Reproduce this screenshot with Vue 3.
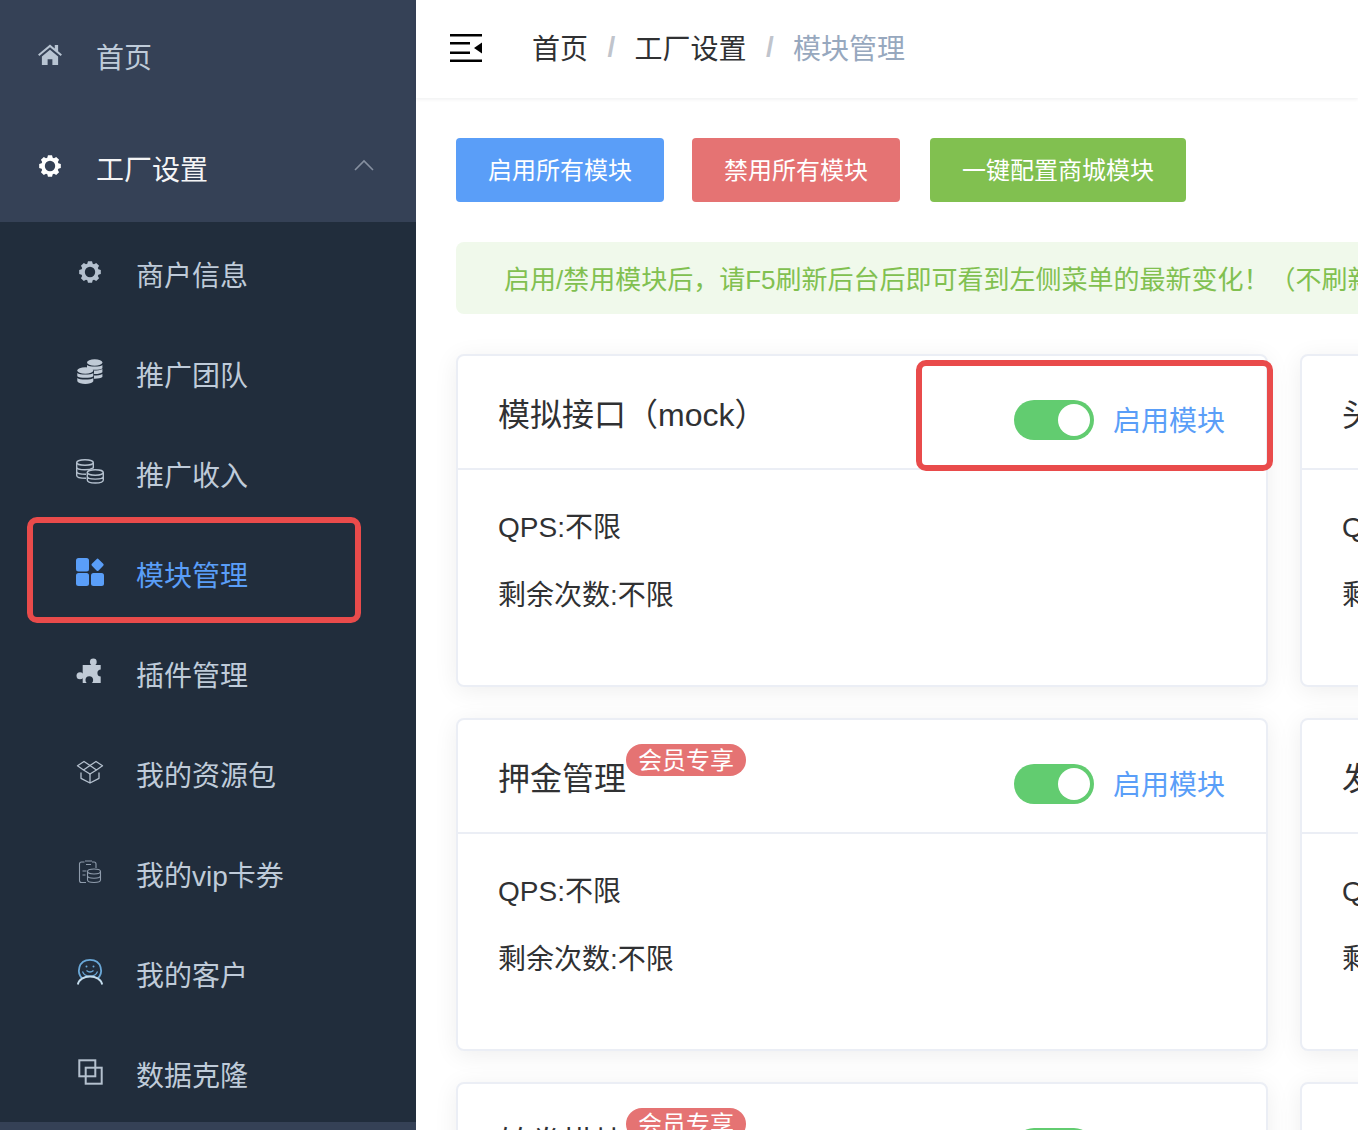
<script setup>
const subMenu = [
  { name: '商户信息', icon: 'gear' },
  { name: '推广团队', icon: 'coins' },
  { name: '推广收入', icon: 'coinsLine' },
  { name: '模块管理', icon: 'apps', active: true },
  { name: '插件管理', icon: 'puzzle' },
  { name: '我的资源包', icon: 'box' },
  { name: '我的vip卡券', icon: 'clip' },
  { name: '我的客户', icon: 'client' },
  { name: '数据克隆', icon: 'clone' }
]

// gear outline: 8 teeth around a 30x30 box
const makeGear = (c, outer, inner) => {
  const pts = []
  for (let i = 0; i < 8; i++) {
    const a = (i * Math.PI) / 4
    const w = Math.PI / 11
    const add = (r, t) => pts.push(`${(c + r * Math.cos(t)).toFixed(2)},${(c + r * Math.sin(t)).toFixed(2)}`)
    add(inner, a - w * 1.1)
    add(outer, a - w * 0.65)
    add(outer, a + w * 0.65)
    add(inner, a + w * 1.1)
  }
  return pts.join(' ')
}
const gearPoints = makeGear(15, 11, 8.8)

const cards = [
  { title: '模拟接口（mock）', side: '头' },
  { title: '押金管理', vip: true, side: '发' },
  { title: '转卷模块', vip: true, side: '' }
]
</script>

<template>
  <div class="page">
    <aside class="sidebar">
      <div class="top-item">
        <svg class="icon home" viewBox="0 0 26 22" width="26" height="21">
          <path d="M13 0.500 0.500 11l1.300 1.600L13 3.500l11.200 9.100 1.300-1.600-4-3.400V1h-3.500v3.700z" fill="#b8c4d2" />
          <path d="M4.500 13 13 6l8.500 7v9H15.500v-6h-5v6H4.500z" fill="#b8c4d2" />
        </svg>
        <span>首页</span>
      </div>
      <div class="top-item open">
        <svg class="icon" viewBox="0 0 30 30" width="30" height="30">
          <polygon :points="gearPoints" fill="#fff" />
          <circle cx="15" cy="15" r="5.200" fill="#354156" />
        </svg>
        <span>工厂设置</span>
        <svg class="chevron" viewBox="0 0 20 12" width="20" height="12">
          <path d="M1 11 10 2l9 9" fill="none" stroke="#8690a0" stroke-width="1.600" />
        </svg>
      </div>
      <ul class="sub-menu">
        <li v-for="item in subMenu" :key="item.name" :class="{ active: item.active }">
          <svg class="icon" viewBox="0 0 30 30" width="30" height="30">
            <template v-if="item.icon === 'gear'">
              <polygon :points="gearPoints" fill="#b4c0ce" />
              <circle cx="15" cy="15" r="5.200" fill="#212d3c" />
            </template>
            <template v-else-if="item.icon === 'coins'">
              <g fill="#c0cad6">
                <ellipse cx="19.700" cy="5.500" rx="7.700" ry="3.200" />
                <path d="M12 8c2 2 13.400 2 15.400 0v3.200c-2 2-13.400 2-15.400 0zM19 13.500c3 0 6.500-.5 8.400-1.500v3.200c-1.500 1.300-5 2-8.400 1.800zM19 18.500c3 0 6.500-.5 8.400-1.500v3c-1.500 1.300-5 1.800-8.400 1.700z" />
                <ellipse cx="10.300" cy="13.500" rx="8" ry="3.200" />
                <path d="M2.300 16c2 2 14 2 16 0v3.300c-2 2-14 2-16 0zM2.300 21c2 2 14 2 16 0v3.300c-2 3.700-14 3.700-16 0z" />
              </g>
            </template>
            <template v-else-if="item.icon === 'coinsLine'">
              <g fill="none" stroke="#b4c0ce" stroke-width="1.400">
                <ellipse cx="10" cy="5.500" rx="8.300" ry="2.800" />
                <path d="M1.700 5.500v13c0 1.800 4 2.800 9.300 2.800M1.700 10c0 1.800 4 2.800 8.300 2.800s6-.5 8.300-2V5.500M1.700 14.500c0 1.800 4 2.800 9.300 2.800" />
                <ellipse cx="20.300" cy="15.500" rx="8" ry="2.700" />
                <path d="M12.300 15.500v7.500c0 4 16 4 16 0v-7.500M12.300 19.500c0 3.500 16 3.500 16 0" />
              </g>
            </template>
            <template v-else-if="item.icon === 'apps'">
              <g fill="#5a9ef8">
                <rect x="1" y="1" width="13" height="13.500" rx="2.500" />
                <rect x="1" y="16" width="13" height="13" rx="2.500" />
                <rect x="16" y="16" width="13" height="13" rx="2.500" />
                <rect x="17.800" y="3" width="9.500" height="9.500" rx="1.500" transform="rotate(45 22.500 7.800)" />
              </g>
            </template>
            <template v-else-if="item.icon === 'puzzle'">
              <g fill="#c0cad6">
                <rect x="7.700" y="8" width="18" height="18" />
                <circle cx="18.300" cy="5" r="3.400" />
                <rect x="16.500" y="6" width="3.600" height="3" />
                <circle cx="5" cy="18.700" r="3.500" />
              </g>
              <g fill="#212d3c">
                <circle cx="26" cy="16" r="3.600" />
                <circle cx="14.300" cy="23" r="3.800" />
                <rect x="12.800" y="24" width="3" height="3" />
              </g>
            </template>
            <template v-else-if="item.icon === 'box'">
              <g fill="none" stroke="#b4c0ce" stroke-width="1.300" stroke-linejoin="round">
                <path d="M15 8.500 9 4.500l-6.500 4.300L8.500 13zM15 8.500l6-4 6.500 4.300L21.500 13zM15 8.500 8.500 13l6.500 4 6.500-4z" />
                <path d="M6 15.500v5.800l9 4.700 9-4.700v-5.800M15 17v9" />
              </g>
            </template>
            <template v-else-if="item.icon === 'clip'">
              <g fill="none" stroke="#8f9cac" stroke-width="1.100">
                <path d="M11 25.500H6.500a2 2 0 0 1-2-2V7a2 2 0 0 1 2-2h3M17 5h2a2 2 0 0 1 2 2v4M10 4h7M11 7.500h5M7.500 14h4M7.500 18h3" />
                <ellipse cx="19" cy="14.500" rx="6.500" ry="2.500" />
                <path d="M12.500 14.500v8.500c0 3.300 13 3.300 13 0v-8.500M12.500 18.700c0 3.300 13 3.300 13 0" />
              </g>
            </template>
            <template v-else-if="item.icon === 'client'">
              <g fill="none" stroke-width="1.800">
                <path d="M7.500 21.500C1.500 16.500 2.800 2.800 15 2.800S28.500 16.500 22.500 21.500" stroke="#6aa8d8" />
                <path d="M15 19.200c-3.500 0-6.500-2-7.500-4.700M15 19.200c3.500 0 6.500-2 7.500-4.700" stroke="#6aa8d8" stroke-width="1.200" />
                <path d="M2.800 27.500C3.800 22.500 9 19.500 15 19.500s11.200 3 12.200 8" stroke="#c4dcec" />
                <path d="M11.500 13.500c2 1.700 5 1.700 7 0" stroke="#6aa8d8" stroke-width="1.300" />
                <circle cx="11.500" cy="9.500" r="1" fill="#6aa8d8" stroke="none" />
                <circle cx="18.500" cy="9.500" r="1" fill="#6aa8d8" stroke="none" />
              </g>
            </template>
            <template v-else>
              <g fill="none" stroke="#b4c0ce" stroke-width="2">
                <rect x="4.300" y="3.300" width="16" height="16" />
                <rect x="10.700" y="10.700" width="16" height="16" />
              </g>
            </template>
          </svg>
          <span class="label">{{ item.name }}</span>
        </li>
      </ul>
      <div class="outline menu-outline"></div>
    </aside>

    <div class="content">
      <header class="navbar">
        <svg class="fold" viewBox="0 0 32 28" width="32" height="28">
          <path d="M0 0h32v2.500H0zM0 8h20v2.500H0zM0 17.500h20V20H0zM0 25.500h32V28H0zM32 8.500v11l-8-5.500z" fill="#000" />
        </svg>
        <nav class="crumbs">
          <span>首页</span>
          <i>/</i>
          <span>工厂设置</span>
          <i>/</i>
          <span class="current">模块管理</span>
        </nav>
      </header>

      <main class="main">
        <div class="actions">
          <button class="btn blue">启用所有模块</button>
          <button class="btn red">禁用所有模块</button>
          <button class="btn green">一键配置商城模块</button>
        </div>
        <div class="alert">启用/禁用模块后，请F5刷新后台后即可看到左侧菜单的最新变化！（不刷新后台也可以正常使用模块功能）</div>

        <div class="grid">
          <template v-for="(card, i) in cards" :key="i">
            <section class="card">
              <div class="card-head">
                <h3>{{ card.title }}</h3>
                <em v-if="card.vip" class="vip">会员专享</em>
                <div class="toggle">
                  <span class="switch"><b></b></span>
                  <span class="toggle-label">启用模块</span>
                </div>
              </div>
              <div class="card-body">
                <p>QPS:不限</p>
                <p>剩余次数:不限</p>
              </div>
            </section>
            <section class="card">
              <div class="card-head">
                <h3>{{ card.side }}</h3>
              </div>
              <div class="card-body">
                <p>QPS:不限</p>
                <p>剩余次数:不限</p>
              </div>
            </section>
          </template>
        </div>
      </main>
      <div class="outline toggle-outline"></div>
    </div>
  </div>
</template>

<style>
html,
body {
  margin: 0;
  overflow: hidden;
}
</style>

<style scoped>
.page {
  display: flex;
  width: 1358px;
  height: 1130px;
  overflow: hidden;
  font-family: "Liberation Sans", "Noto Sans CJK SC", sans-serif;
  background: #fff;
}

.sidebar {
  position: relative;
  flex: 0 0 416px;
  background: #354156;
}

.top-item {
  display: flex;
  align-items: center;
  height: 112px;
  padding-left: 96px;
  position: relative;
  font-size: 28px;
  color: #bfcbd9;
}

.top-item.open {
  height: 110px;
  color: #f4f4f5;
}

.top-item.open span {
  padding-top: 2px;
}

.top-item .icon {
  position: absolute;
  left: 35px;
  top: 39px;
}

.top-item .home {
  left: 37px;
  top: 44px;
}

.chevron {
  position: absolute;
  right: 42px;
  top: 47px;
}

.sub-menu {
  margin: 0;
  padding: 0;
  list-style: none;
  background: #212d3c;
}

.sub-menu li {
  display: flex;
  align-items: center;
  gap: 31px;
  height: 100px;
  padding-left: 75px;
  font-size: 28px;
  color: #bfcbd9;
}

.label {
  padding-top: 4px;
}

.sub-menu li.active {
  color: #5a9ef8;
}

.outline {
  position: absolute;
  border: 6px solid #e94b4b;
  border-radius: 10px;
  box-sizing: border-box;
}

.menu-outline {
  left: 27px;
  top: 517px;
  width: 334px;
  height: 106px;
}

.content {
  position: relative;
  flex: 1;
  min-width: 0;
}

.navbar {
  display: flex;
  align-items: center;
  height: 98px;
  padding-left: 34px;
  background: #fff;
  box-shadow: 0 1px 4px rgba(0, 21, 41, 0.08);
  position: relative;
}

.fold {
  margin-top: -2px;
}

.crumbs {
  display: flex;
  align-items: center;
  margin-left: 50px;
  margin-top: -4px;
  font-size: 28px;
  color: #303133;
}

.crumbs i {
  width: 46.500px;
  text-align: center;
  font-style: normal;
  font-weight: 700;
  color: #c0c4cc;
}

.crumbs .current {
  color: #97a8be;
}

.main {
  padding: 40px 0 0 40px;
}

.actions {
  display: flex;
}

.btn {
  height: 64px;
  padding: 0 0 4px;
  margin-right: 28px;
  border: 0;
  border-radius: 4px;
  font-family: inherit;
  font-size: 24px;
  white-space: nowrap;
  color: #fff;
}

.btn.blue {
  width: 208px;
  background: #5a9ef8;
}

.btn.red {
  width: 208px;
  margin-right: 30px;
  background: #e57373;
}

.btn.green {
  width: 256px;
  background: #81c050;
}

.alert {
  width: 1200px;
  height: 72px;
  margin-top: 40px;
  padding-left: 48px;
  line-height: 76px;
  white-space: nowrap;
  overflow: hidden;
  border-radius: 8px;
  font-size: 26px;
  color: #81c050;
  background: #f0f9eb;
}

.grid {
  display: grid;
  grid-template-columns: 812px 812px;
  gap: 31px 32px;
  margin-top: 40px;
}

.card {
  box-sizing: border-box;
  height: 333px;
  background: #fff;
  border: 2px solid #ebeef5;
  border-radius: 8px;
  box-shadow: 0 4px 24px rgba(0, 0, 0, 0.07);
}

.card-head {
  position: relative;
  display: flex;
  align-items: center;
  height: 112px;
  padding-left: 40px;
  border-bottom: 2px solid #ebeef5;
}

.card-head h3 {
  margin: 0;
  font-size: 32px;
  font-weight: 400;
  color: #303133;
  white-space: nowrap;
}

.vip {
  position: absolute;
  left: 168px;
  top: 24px;
  width: 120px;
  height: 32px;
  line-height: 34px;
  text-align: center;
  border-radius: 16px;
  font-style: normal;
  font-size: 24px;
  color: #fff;
  background: #e57373;
}

.toggle {
  position: absolute;
  right: 41px;
  top: 44px;
  display: flex;
  align-items: center;
  gap: 19px;
}

.switch {
  display: block;
  width: 80px;
  height: 40px;
  border-radius: 20px;
  background: #62cc70;
  position: relative;
}

.switch b {
  position: absolute;
  right: 4px;
  top: 4px;
  width: 32px;
  height: 32px;
  border-radius: 50%;
  background: #fff;
}

.toggle-label {
  margin-top: -2px;
  font-size: 28px;
  color: #5a9ef8;
}

.card-body {
  padding: 24px 40px 0;
}

.card-body p {
  margin: 0;
  height: 68px;
  line-height: 68px;
  font-size: 28px;
  color: #303133;
  white-space: nowrap;
}

.toggle-outline {
  left: 500px;
  top: 360px;
  width: 357px;
  height: 111px;
}
</style>
